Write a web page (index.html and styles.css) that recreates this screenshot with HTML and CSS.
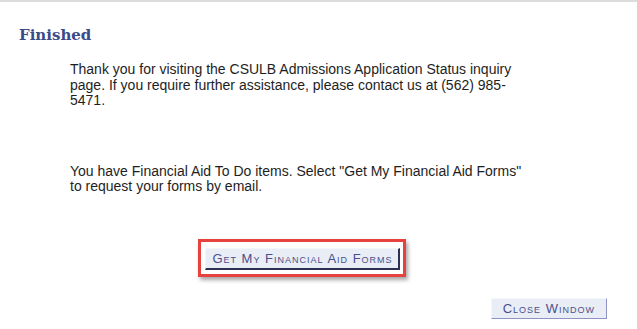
FILE: index.html
```html
<!DOCTYPE html>
<html lang="en">
<head>
  <meta charset="UTF-8">
  <title>Finished</title>
  <link rel="stylesheet" href="styles.css">
</head>
<body>
  <div id="page">
    <h1 class="page-title">Finished</h1>

    <div class="content">
      <p class="msg">
        Thank you for visiting the CSULB Admissions Application Status inquiry
        page. If you require further assistance, please contact us at (562) 985-5471.
      </p>

      <p class="msg msg-aid">
        You have Financial Aid To Do items. Select "Get My Financial Aid Forms"
        to request your forms by email.
      </p>

      <div class="aid-action">
        <div class="highlight">
          <button class="ps-button">Get My Financial Aid Forms</button>
        </div>
      </div>
    </div>

    <div class="footer-bar">
      <button class="ps-button">Close Window</button>
    </div>
  </div>
</body>
</html>
```

FILE: styles.css
```css
:root {
  --title-color: #3b4a8b;
  --text-color: #1e1e1e;
  --btn-text: #4b4f8c;
  --btn-bg: #e9edf5;
  --btn-dark: #2d3152;
  --mark-red: #e8423f;
}

body {
  margin: 0;
  background: #fff;
  font-family: "Liberation Sans", Arial, sans-serif;
  font-size: 14px;
  color: var(--text-color);
}

#page {
  border-top: 2px solid #dcdcdc;
  height: 327px;
  box-sizing: border-box;
}

.page-title {
  margin: 0;
  padding: 24px 0 0 19px;
  font-family: "DejaVu Serif", Georgia, serif;
  font-size: 15px;
  font-weight: bold;
  color: var(--title-color);
}

/* message block */
.content {
  width: 464px;
  margin-left: 70px;
  padding-top: 18px;
}

.msg {
  margin: 0;
  line-height: 15.5px;
}

.msg-aid {
  margin-top: 55px;
}

.aid-action {
  display: flex;
  justify-content: center;
  margin-top: 44px;
}

/* red callout round the button */
.highlight {
  border: 3px solid var(--mark-red);
  padding: 6px 3px 4px 4px;
  box-shadow: 2px 3px 4px rgba(0,0,0,0.35);
}

/* PeopleSoft style push button */
.ps-button {
  font-family: "Liberation Sans", Arial, sans-serif;
  font-size: 13px;
  font-variant: small-caps;
  letter-spacing: 1px;
  color: var(--btn-text);
  background: var(--btn-bg);
  border: 1px solid;
  border-color: #f4f6fa var(--btn-dark) var(--btn-dark) #f4f6fa;
  border-width: 1px 2px 2px 1px;
  padding: 2px 5px 2px 6px;
  cursor: pointer;
}

.footer-bar {
  display: flex;
  justify-content: flex-end;
  padding-right: 30px;
  margin-top: 21px;
}
.footer-bar .ps-button {
  border-color: #f4f6fa #8e93c4 #8e93c4 #f4f6fa;
  border-width: 1px 1px 1px 1px;
  padding: 2px 11px;
}
```
